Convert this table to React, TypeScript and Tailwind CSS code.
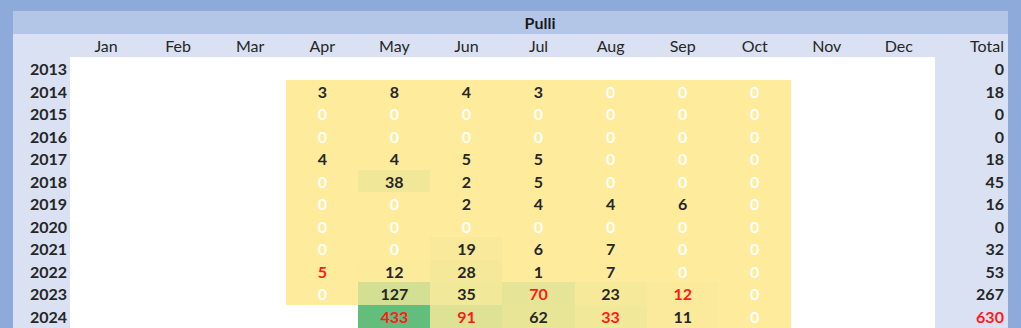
import React from "react";

type Cell = { v: number | null; bg?: string; red?: boolean };

const Y = "bg-[#ffeb9c]";

const c = (v: number | null, bg: string = Y, red = false): Cell => ({ v, bg, red });
const E: Cell = { v: null };

const months = ["Jan", "Feb", "Mar", "Apr", "May", "Jun", "Jul", "Aug", "Sep", "Oct", "Nov", "Dec"];

const rows: { year: number; cells: Cell[]; total: number; totalRed?: boolean }[] = [
  { year: 2013, cells: [E, E, E, E, E, E, E, E, E, E, E, E], total: 0 },
  { year: 2014, cells: [E, E, E, c(3), c(8), c(4), c(3), c(0), c(0), c(0), E, E], total: 18 },
  { year: 2015, cells: [E, E, E, c(0), c(0), c(0), c(0), c(0), c(0), c(0), E, E], total: 0 },
  { year: 2016, cells: [E, E, E, c(0), c(0), c(0), c(0), c(0), c(0), c(0), E, E], total: 0 },
  { year: 2017, cells: [E, E, E, c(4), c(4), c(5), c(5), c(0), c(0), c(0), E, E], total: 18 },
  { year: 2018, cells: [E, E, E, c(0), c(38, "bg-[#f1e799]"), c(2), c(5), c(0), c(0), c(0), E, E], total: 45 },
  { year: 2019, cells: [E, E, E, c(0), c(0), c(2), c(4), c(4), c(6), c(0), E, E], total: 16 },
  { year: 2020, cells: [E, E, E, c(0), c(0), c(0), c(0), c(0), c(0), c(0), E, E], total: 0 },
  { year: 2021, cells: [E, E, E, c(0), c(0), c(19, "bg-[#f8ea9a]"), c(6), c(7), c(0), c(0), E, E], total: 32 },
  { year: 2022, cells: [E, E, E, c(5, Y, true), c(12, "bg-[#fceb9b]"), c(28, "bg-[#f5e999]"), c(1), c(7), c(0), c(0), E, E], total: 53 },
  {
    year: 2023,
    cells: [E, E, E, c(0), c(127, "bg-[#d3df92]"), c(35, "bg-[#f2e899]"), c(70, "bg-[#e6e497]", true), c(23, "bg-[#f6e99a]"), c(12, "bg-[#fbea9b]", true), c(0), E, E],
    total: 267,
  },
  {
    year: 2024,
    cells: [E, E, E, E, c(433, "bg-[#63be7b]", true), c(91, "bg-[#dee295]", true), c(62, "bg-[#e9e597]"), c(33, "bg-[#f2e899]", true), c(11, "bg-[#fbea9b]"), c(0), E, E],
    total: 630,
    totalRed: true,
  },
];

const grid = "grid grid-cols-[57px_repeat(12,72.08px)_73px]";

export default function App() {
  return (
    <div
      className="w-[1021px] h-[328px] overflow-hidden bg-[#8eaadb] pt-[11px] px-[13px] text-[16px] text-[#262626]"
      style={{ fontFamily: "Lato, 'Open Sans', sans-serif" }}
    >
      <div className="h-[23px] bg-[#b4c6e7] flex items-center justify-center pl-[59px] font-bold text-[#1a1a1a]">Pulli</div>
      <div className={`${grid} h-[23px] bg-[#d9e1f2] items-center`}>
        <div />
        {months.map((m) => (
          <div key={m} className="text-center">
            {m}
          </div>
        ))}
        <div className="text-right pr-[4px]">Total</div>
      </div>
      {rows.map((r) => (
        <div key={r.year} className={`${grid} h-[22.5px]`}>
          <div className="bg-[#d9e1f2] flex items-center justify-end pr-[3px] font-bold">{r.year}</div>
          {r.cells.map((cell, i) => (
            <div
              key={i}
              className={`flex items-center justify-center font-bold ${cell.v === null ? "bg-white" : cell.bg} ${
                cell.v === 0 ? "text-white" : cell.red ? "text-[#ff1a1a]" : ""
              }`}
            >
              {cell.v === null ? "" : cell.v}
            </div>
          ))}
          <div className={`bg-[#d9e1f2] flex items-center justify-end pr-[4px] font-bold ${r.totalRed ? "text-[#ff1a1a]" : ""}`}>
            {r.total}
          </div>
        </div>
      ))}
    </div>
  );
}
